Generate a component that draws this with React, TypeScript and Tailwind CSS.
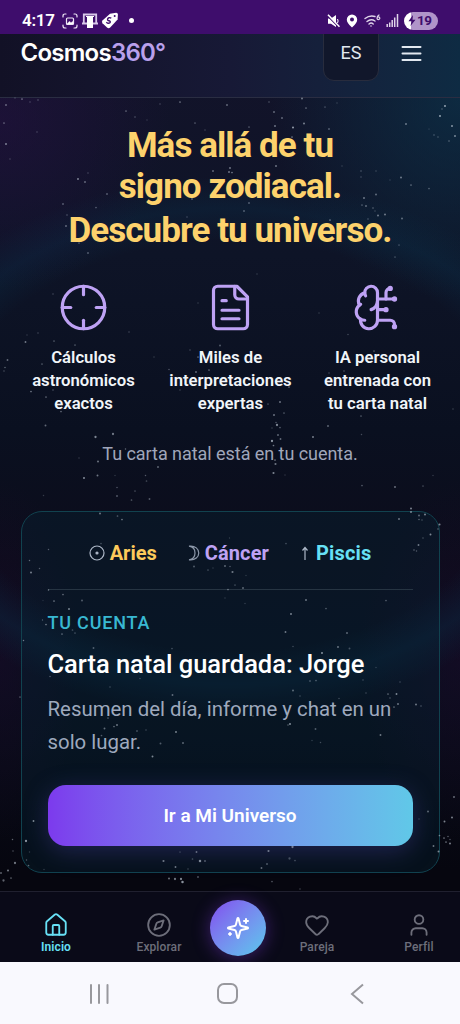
import { BrainCircuit, Compass, Crosshair, Heart, House, User } from "lucide-react";

// x, y, radius, opacity
const stars = [
  [6, 105, 1, 0.6], [22, 99, 0.9, 0.7], [15, 98, 0.7, 0.4], [30, 102, 0.8, 0.4], [38, 100, 0.8, 0.5],
  [160, 104, 0.8, 0.4], [180, 102, 0.9, 0.7], [227, 105, 1, 0.6], [269, 102, 0.8, 0.5], [302, 98.5, 1, 0.7],
  [306, 108, 0.9, 0.6], [325, 107, 0.9, 0.4], [337, 103, 0.8, 0.3], [445, 106, 1.1, 0.9], [442, 109, 0.8, 0.5],
  [4, 123, 0.9, 0.6], [6, 144, 1, 0.8], [10, 159, 0.7, 0.4], [37, 132, 0.8, 0.4], [126, 111, 0.9, 0.6],
  [135, 117, 0.8, 0.5], [147, 120, 0.7, 0.3], [195, 123, 0.9, 0.5], [205, 130, 0.7, 0.4], [249, 127, 0.9, 0.5],
  [274, 112, 1, 0.6], [282, 118, 1, 0.6], [293, 127.5, 1.1, 0.9], [275, 126, 1, 0.7], [304, 123.5, 1.1, 0.7],
  [292, 137, 0.9, 0.7], [329, 129, 1, 0.5], [406, 124, 1, 0.7], [440, 116, 1.1, 0.9], [452, 126, 1, 0.9],
  [455, 136, 1, 0.8], [449, 141, 0.8, 0.6], [434, 135, 0.8, 0.5], [429, 129, 0.6, 0.4], [438, 137, 0.7, 0.5],
  [213, 171, 1, 0.6], [230, 168, 1, 0.7], [229, 172, 1, 0.7], [232, 172.5, 0.9, 0.7], [276, 166, 1, 0.7],
  [78, 179, 1.1, 0.7], [85, 182, 1, 0.6], [88, 173, 0.8, 0.4], [107, 194, 1, 0.5], [63, 204, 1, 0.5],
  [96, 207.5, 0.9, 0.5], [67, 215, 0.8, 0.5], [66, 226, 1, 0.6], [79, 243, 0.9, 0.5], [88, 253, 1, 0.5],
  [192, 199, 1, 0.5], [249, 203, 1, 0.5], [244, 211, 1, 0.5], [187, 217, 0.8, 0.4], [342, 166, 0.8, 0.3],
  [361, 171, 0.8, 0.5], [361, 177, 0.8, 0.4], [376, 171, 0.7, 0.4], [401, 177.5, 1, 0.7], [411, 185, 0.9, 0.6],
  [429, 188.5, 0.9, 0.5], [390, 180, 0.7, 0.3], [376, 194.5, 1, 0.6], [364, 198, 1, 0.7], [362, 205, 0.9, 0.5],
  [366, 206, 1, 0.6], [373, 208, 0.8, 0.6], [378, 215.5, 1, 0.7], [385, 214.5, 1, 0.7], [375, 211, 0.7, 0.4],
  [368, 219, 0.8, 0.5], [402, 218.5, 1, 0.6], [330, 220, 0.9, 0.7], [399, 245, 0.9, 0.4], [395, 257, 0.9, 0.4],
  [53, 294, 0.8, 0.4], [38, 333, 0.8, 0.4], [27, 335, 0.7, 0.3], [25.5, 342, 1, 0.7], [54, 341, 0.9, 0.5],
  [75, 345, 0.9, 0.5], [7.5, 360, 1, 0.6], [5, 367.5, 0.8, 0.6], [4, 371, 0.7, 0.5], [42, 364, 0.9, 0.5],
  [31, 391.5, 0.9, 0.7], [46, 397, 0.9, 0.6], [61, 411.5, 0.9, 0.6], [53, 390, 0.8, 0.5], [129, 332, 0.8, 0.4],
  [154, 357, 0.8, 0.3], [198, 303, 0.8, 0.3], [190, 350, 0.8, 0.4], [220, 345.5, 1, 0.5], [198, 357, 0.9, 0.6],
  [196, 372, 1, 0.6], [169, 369.5, 0.8, 0.5], [209, 370, 0.9, 0.6], [180, 390, 0.7, 0.4], [257, 274, 0.8, 0.3],
  [319, 313, 0.8, 0.3], [348, 334.5, 0.8, 0.4], [374, 351, 0.9, 0.5], [344, 371, 0.8, 0.5], [329, 373, 0.8, 0.4],
  [289, 387, 0.9, 0.6], [280, 402, 1, 0.7], [268, 404, 0.9, 0.4], [274, 415, 1, 0.7], [284, 413, 0.9, 0.5],
  [361, 416, 0.9, 0.5], [453, 409, 0.7, 0.4], [45.5, 425.5, 1, 0.6], [95.5, 437, 1.2, 0.8], [113, 434, 1.2, 0.7],
  [79, 458, 0.8, 0.3], [98, 461.5, 1, 0.7], [125.5, 449, 0.8, 0.6], [84, 478, 1.1, 0.8], [97.5, 475.5, 1, 0.7],
  [158, 467, 1, 0.6], [117, 487.5, 0.8, 0.5], [117, 496, 1, 0.5], [115, 475.5, 0.7, 0.3], [135, 491, 0.9, 0.4],
  [131.5, 500, 0.9, 0.5], [149.5, 499, 1, 0.5], [145.5, 475.5, 0.8, 0.5], [146.5, 481, 0.9, 0.4], [43.5, 495.5, 0.8, 0.3],
  [277, 425, 1.2, 0.8], [280, 427.5, 0.9, 0.5], [276, 422.5, 0.8, 0.5], [272, 428, 0.7, 0.4], [278, 435, 1, 0.6],
  [272, 441, 1.2, 0.9], [280.5, 439, 1, 0.6], [273.5, 445.5, 0.9, 0.7], [313, 437, 1.1, 0.7], [328, 426, 1, 0.6],
  [361.5, 434.5, 0.8, 0.4], [275.5, 464, 1.1, 0.7], [273.5, 473, 1.1, 0.8], [285, 475, 0.7, 0.3], [275, 460, 0.9, 0.7],
  [362, 485.5, 0.9, 0.5], [395, 487, 1.1, 0.6], [423, 486, 0.9, 0.4], [433, 475.5, 0.8, 0.3], [411, 508.5, 1, 0.8],
  [411, 512, 1, 0.8], [419, 515.5, 1, 0.6], [425, 514.5, 1, 0.8], [399, 519, 1, 0.7], [419, 519.5, 0.8, 0.6],
  [422, 520, 0.7, 0.5], [439.5, 524.5, 1.1, 0.8], [438, 529, 0.8, 0.6], [430.5, 534.5, 1, 0.8], [423, 538, 0.7, 0.5],
  [418.5, 545, 1, 0.7], [414, 550, 0.8, 0.6], [416.5, 551, 0.8, 0.5], [100, 513.5, 1, 0.7], [117.5, 516, 0.9, 0.5],
  [122, 519.5, 0.9, 0.7], [101, 543.5, 0.9, 0.4], [48.5, 549.5, 0.8, 0.5], [29.5, 560.5, 0.8, 0.6], [31, 572.5, 1.1, 0.7],
  [39.5, 568.5, 0.8, 0.5], [229.5, 538, 0.7, 0.3], [286, 543.5, 0.9, 0.4], [194, 566.5, 1, 0.5], [208, 570, 0.9, 0.4],
  [213, 568, 0.7, 0.3], [225, 566, 1, 0.6], [230, 566.5, 0.8, 0.5], [232.5, 572, 1.1, 0.7], [246, 575.5, 0.7, 0.3],
  [235, 585, 0.9, 0.4], [243, 588, 1, 0.6], [228, 589.5, 0.9, 0.6], [48.5, 590, 0.8, 0.7], [63, 594.5, 0.9, 0.6],
  [54, 601, 0.9, 0.7], [82, 600.5, 1, 0.5], [69, 609, 1, 0.8], [43, 600.5, 0.7, 0.2], [225, 598, 0.7, 0.3],
  [245, 603.5, 0.8, 0.3], [306, 600, 1, 0.7], [326, 608.5, 0.9, 0.5], [386, 600.5, 0.9, 0.5], [291, 614, 1.1, 0.7],
  [285.5, 632, 1, 0.7], [347, 633, 1, 0.6], [338, 647, 1.1, 0.6], [349.5, 648.5, 1, 0.4], [322, 653, 1.1, 0.8],
  [293, 646.5, 0.8, 0.4], [376, 667.5, 0.8, 0.3], [93.5, 648, 1, 0.5], [172, 648.5, 0.9, 0.4], [42.5, 620, 0.7, 0.5],
  [46, 624.5, 0.9, 0.7], [62, 634, 0.9, 0.6], [72.5, 630, 0.9, 0.4], [75, 633, 0.9, 0.4], [23.5, 640.5, 0.8, 0.7],
  [50, 676.5, 0.8, 0.5], [140, 678.5, 0.7, 0.4], [110, 687, 0.8, 0.4], [172.5, 695, 1, 0.6], [20, 697, 0.9, 0.5],
  [293, 690.5, 1, 0.6], [300, 696, 0.8, 0.4], [310, 681, 1, 0.4], [316, 680.5, 0.9, 0.5], [363, 680, 0.8, 0.4],
  [396.5, 694, 1, 0.8], [388, 694, 0.9, 0.6], [398, 704, 1, 0.7], [394, 707, 0.9, 0.6], [390, 698, 0.8, 0.5],
  [400, 682, 0.8, 0.4], [416, 704.5, 1, 0.7], [421, 706, 0.8, 0.5], [366, 693, 0.8, 0.4], [339, 698.5, 0.8, 0.4],
  [108, 718, 0.9, 0.5], [117, 725, 1, 0.7], [114, 726.5, 0.9, 0.6], [104.5, 728.5, 1, 0.6], [101.5, 735.5, 0.9, 0.5],
  [137, 731, 1, 0.4], [146, 730, 0.8, 0.4], [176, 732, 1.1, 0.7], [160.5, 743.5, 1, 0.5], [183, 743, 1, 0.6],
  [152.5, 756.5, 1, 0.8], [290, 724, 1.1, 0.8], [288, 725, 0.8, 0.6], [315.5, 729, 1, 0.5], [380.5, 735, 1, 0.7],
  [312, 740.5, 0.8, 0.3], [320.5, 742.5, 0.8, 0.4], [253, 716, 0.8, 0.4], [454, 797, 1.1, 0.6], [428, 811.5, 1, 0.6],
  [419, 819, 0.8, 0.3], [452, 817.5, 1, 0.8], [444.5, 821.5, 1, 0.8], [439.5, 835.5, 0.9, 0.7], [444, 838, 0.9, 0.7],
  [448, 836.5, 0.8, 0.6], [446, 842, 0.9, 0.7], [450, 843.5, 1, 0.8], [450, 839.5, 0.8, 0.5], [433.5, 846, 1, 0.7],
  [438.5, 851.5, 1, 0.8], [33.5, 821, 1, 0.8], [12.5, 839.5, 0.8, 0.6], [26, 841, 1.2, 0.9], [13, 851, 0.8, 0.5],
  [29.5, 852, 0.8, 0.3], [15, 863, 1.2, 0.7], [26.5, 860, 0.8, 0.5], [28.5, 865.5, 0.9, 0.6], [8, 870.5, 1.1, 0.7],
  [1, 873, 1, 0.6], [11, 878, 0.9, 0.6], [3.5, 880.5, 1.2, 0.6], [44, 869.5, 0.8, 0.3], [163.5, 861, 1.1, 0.7],
  [180, 852, 0.9, 0.3], [196.5, 852, 1, 0.6], [192.5, 859, 0.9, 0.4], [200, 861, 1.3, 0.8], [205, 861, 1, 0.5],
  [175.5, 867, 1, 0.7], [188, 869, 0.8, 0.4], [169, 878.5, 1, 0.7], [175, 879, 1.2, 0.7], [181, 879, 1.2, 0.8],
  [182.5, 882, 1.3, 0.9], [198, 877, 1, 0.5], [268.5, 851, 1.1, 0.7], [292.5, 847, 1.2, 0.7], [289.5, 858.5, 1.2, 0.4],
  [295, 860.5, 0.9, 0.4], [267, 864, 1, 0.5], [261.5, 868, 1, 0.6], [272, 881.5, 0.9, 0.5], [300, 889, 0.8, 0.4],
];

function DocIcon({ size, strokeWidth, className }: { size?: number | string; strokeWidth?: number | string; className?: string }) {
  return (
    <svg width={size} height={size} viewBox="0 0 24 24" fill="none" stroke="currentColor" strokeWidth={strokeWidth} strokeLinecap="round" strokeLinejoin="round" className={className}>
      <path d="M15 2H6a2 2 0 0 0-2 2v16a2 2 0 0 0 2 2h12a2 2 0 0 0 2-2V7Z" />
      <path d="M14 2v4a2 2 0 0 0 2 2h4" />
      <path d="M10 10.500H8M16 15H8M16 19H8" transform="translate(0 -1.700)" />
    </svg>
  );
}

const features = [
  { icon: Crosshair, lines: ["Cálculos", "astronómicos", "exactos"] },
  { icon: DocIcon, lines: ["Miles de", "interpretaciones", "expertas"] },
  { icon: BrainCircuit, lines: ["IA personal", "entrenada con", "tu carta natal"] },
];

function StatusBar() {
  return (
    <div className="flex h-[34px] shrink-0 items-center bg-[#3e0d6c] pt-[7px] pr-[22px] pl-[22px] text-white">
      <span className="w-[40px] text-[17px] leading-none font-semibold tracking-[-0.3px]">4:17</span>
      <svg width="16" height="16" viewBox="0 0 16 16" fill="none" stroke="#eee6f5" strokeWidth="1.2" strokeLinecap="round">
        <path d="M1 4V3q0-2 2-2h1M12 1h1q2 0 2 2v1M15 12v1q0 2-2 2h-1M4 15H3q-2 0-2-2v-1" />
        <rect x="4.5" y="5" width="7" height="6.5" rx="1" fill="#3e0d6c" />
        <path d="M5 11l2.3-2.6 1.7 1.3 2-1.2v2.5z" fill="white" strokeWidth=".6" />
      </svg>
      <svg className="ml-[4px]" width="16" height="16" viewBox="0 0 16 16" fill="none">
        <path d="M1.8 10V1.5h12.4V10M0 10.5h16" stroke="#d7c7e8" strokeWidth="1.8" />
        <path d="M4 3h8v1h-1v11H5V4H4z" fill="white" />
      </svg>
      <svg className="ml-[3px]" width="18" height="17" viewBox="0 0 18 17" fill="none">
        <path d="M9 1.8l6.2-1.1q1.6 0 1.7 1.6l-.3 5.2-7.4 8q-1.6 1.4-3.2 0l-4.5-4.3q-1.3-1.5.2-3z" fill="white" />
        <circle cx="13.7" cy="4" r="1" fill="#3e0d6c" />
        <path d="M10.3 6.2Q7.6 4.8 6.6 7q-.3 1.5 1.5 1.8t.8 2q-1.600 1.300-3.600-.600" stroke="#3e0d6c" strokeWidth="1.400" />
      </svg>
      <span className="ml-[10px] size-[5px] rounded-full bg-white" />
      <div className="ml-auto flex items-center">
        <svg width="13" height="14" viewBox="0 0 13 14" fill="white">
          <path d="M1 4.500h3L9 1v12L4 9.700H1z" />
          <path d="M0 1.500l12 12" stroke="#3e0d6c" strokeWidth="1.200" />
          <path d="M1 .8l11.500 12" stroke="white" strokeWidth="1.600" />
          <path d="M10.500 5q1.200 2 0 4" fill="none" stroke="white" />
        </svg>
        <svg className="ml-[6px]" width="12" height="14" viewBox="0 0 12 14">
          <path d="M6 .5a5.200 5.200 0 0 1 5.200 5.200Q11.200 9 6 13.500.8 9 .8 5.700A5.200 5.200 0 0 1 6 .5z" fill="white" />
          <circle cx="6" cy="5.500" r="2" fill="#3e0d6c" />
        </svg>
        <svg className="ml-[6px]" width="17" height="14" viewBox="0 0 17 14" fill="none" stroke="#e0d5ea" strokeWidth="1.400" strokeLinecap="round">
          <path d="M1 4.500Q5.500 1 11 2.500M3 7.500q4-3.300 8-.5M5 10q2.200-1.800 4.200 0" />
          <circle cx="7" cy="12" r=".7" fill="white" stroke="none" />
          <path d="M15 1q-2 1.200-2 3.200M13 4.200a1.400 1.400 0 1 0 2.800 0 1.400 1.400 0 1 0-2.800 0" strokeWidth="1.200" />
        </svg>
        <svg className="ml-[5px]" width="13" height="13" viewBox="0 0 13 13" stroke="#e0d5ea" strokeWidth="1.500">
          <path d="M1.200 13v-3M3.700 13V8.500M6.200 13V6M8.700 13V3.500M11.500 13V0" />
        </svg>
        <div className="ml-[5px] flex h-[18px] w-[34px] items-center rounded-full bg-linear-to-r from-white from-20% to-[#b094c9] to-20% pl-[4px] text-[#3e0d6c]">
          <svg width="8" height="11" viewBox="0 0 8 11" fill="currentColor">
            <path d="M5 0L.5 6.200h3L2.500 11l5-6.300h-3z" />
          </svg>
          <span className="ml-[1px] text-[13.500px] leading-none font-bold tracking-[-0.5px]">19</span>
        </div>
      </div>
    </div>
  );
}

function Header() {
  return (
    <header className="flex h-[64px] shrink-0 items-start overflow-hidden border-b border-[#2a2d42] bg-linear-to-r from-[#121126] via-[#171936] to-[#0e2b43] pl-[20.500px]">
      <div className="mt-[4px] font-[Inter] text-[24px] leading-[30px] font-semibold tracking-[-0.750px] text-white">
        Cosmos<span className="text-[#b9a0ec]">360°</span>
      </div>
      <div className="-mt-[12px] mr-[22px] ml-auto flex h-[59px] w-[56px] items-end justify-center rounded-[11px] border border-[#282c3d] bg-[#11172b] pb-[15px] text-[18px] leading-[24px] text-[#e2e8f0]">
        ES
      </div>
      <svg className="mt-[10px] mr-[38px]" width="21" height="18" viewBox="0 0 21 18" stroke="#e2e8f0" strokeWidth="2" strokeLinecap="round">
        <path d="M1.500 3h18M1.500 9.500h18M1.500 16h18" />
      </svg>
    </header>
  );
}

function Sky() {
  return (
    <svg className="pointer-events-none absolute inset-0 z-10" width="460" height="892" viewBox="0 0 460 892">
      {stars.map(([x, y, r, o], i) => (
        <circle key={i} cx={x} cy={y} r={r * 0.95} fill="#cbd5e1" opacity={o * 0.75} />
      ))}
    </svg>
  );
}

function NavItem({ icon: Icon, label, active, className }: { icon: typeof House; label: string; active?: boolean; className: string }) {
  return (
    <div className={`flex flex-col items-center ${active ? "text-[#67e0f5]" : "text-[#6d6e7a]"} ${className}`}>
      <Icon size={26} strokeWidth={1.7} />
      <span className={`mt-[1px] text-[12px] leading-[16px] tracking-[0.1px] ${active ? "font-semibold" : "font-medium"}`}>{label}</span>
    </div>
  );
}

export default function App() {
  return (
    <div className="relative flex h-[1024px] w-[460px] flex-col overflow-hidden bg-[radial-gradient(ellipse_170px_170px_at_0px_120px,#27104480,transparent),radial-gradient(ellipse_190px_200px_at_460px_100px,#0b344bb0,transparent),radial-gradient(ellipse_340px_245px_at_230px_446px,transparent_84%,#0b294270_97%,transparent_110%),radial-gradient(ellipse_100px_180px_at_460px_660px,#1b0a2a80,transparent),radial-gradient(ellipse_80px_180px_at_0px_660px,#1b0a2a80,transparent),linear-gradient(#14132b,#0e1427_25%,#0a1020_42%,#0c0c1b_55%,#090e1d_65%,#06060f_85%)] font-[Roboto,sans-serif]">
      <Sky />
      <StatusBar />
      <Header />

      <main className="flex h-[793px] shrink-0 flex-col px-[20.500px]">
        <h1 className="mt-[28px] text-center text-[35px] leading-[40.500px] font-bold tracking-[-0.950px] text-[#fdd26c]">
          Más allá de tu
          <br />
          signo zodiacal.
          <span className="mt-[4px] block">Descubre tu universo.</span>
        </h1>

        <div className="mt-[30px] grid grid-cols-[126px_168px_126px]">
          {features.map(({ icon: Icon, lines }) => (
            <div key={lines[0]} className="flex flex-col items-center">
              <Icon size={51} strokeWidth={1.5} className="text-[#bea2f4]" />
              <p className="mt-[13px] text-center text-[16.700px] leading-[23px] font-semibold whitespace-nowrap text-[#f1f5f9]">
                {lines.map((line) => (
                  <span key={line} className="block">{line}</span>
                ))}
              </p>
            </div>
          ))}
        </div>

        <p className="mt-[27px] text-center text-[18px] leading-[24px] tracking-[-0.050px] text-[#a0a6ba]">Tu carta natal está en tu cuenta.</p>

        <section className="mt-[45px] h-[362px] rounded-[21px] border border-[#11424f] bg-[#06283852] px-[26px]">
          <div className="flex h-[78px] items-center justify-center border-b border-[#263442] pt-[5px] text-[20px] font-bold">
            <span className="flex items-center gap-[5px] text-[#fdca5b]">
              <svg width="16" height="16" viewBox="0 0 16 16" fill="none" stroke="#aeb8c8" strokeWidth="1.200">
                <circle cx="8" cy="8" r="7" />
                <circle cx="8" cy="8" r="1" fill="#aeb8c8" />
              </svg>
              Aries
            </span>
            <span className="ml-[31px] flex items-center gap-[5px] tracking-[0.100px] text-[#bea2f4]">
              <svg width="12" height="16" viewBox="0 0 12 16" fill="none" stroke="#8d98aa" strokeWidth="1.200">
                <path d="M1 1.200c13-1.500 13 15 0 13.600 8-1.200 8-12.400 0-13.600z" />
              </svg>
              Cáncer
            </span>
            <span className="ml-[32px] flex items-center gap-[7px] text-[#67e0f5]">
              <svg width="8" height="16" viewBox="0 0 8 16" fill="none" stroke="#aeb8c8" strokeWidth="1.200">
                <path d="M4 15V3M1.500 5.500L4 2.500l2.500 3" />
              </svg>
              <span className="tracking-[0.150px]">Piscis</span>
            </span>
          </div>
          <div className="mt-[21px] text-[18px] leading-[24px] font-medium tracking-[0.800px] text-[#38b8d2]">TU CUENTA</div>
          <h2 className="mt-[12px] text-[25.500px] leading-[34px] font-medium tracking-[-0.030px] text-white">Carta natal guardada: Jorge</h2>
          <p className="mt-[12px] text-[20.400px] leading-[33px] text-[#9ea9bd]">
            Resumen del día, informe y chat en un
            <br />
            solo lugar.
          </p>
          <button className="mt-[26px] block h-[61px] w-full rounded-[18px] bg-linear-to-r from-[#7c3aed] to-[#60c8e8] pt-[2px] text-[19px] font-semibold text-white shadow-[0_5px_24px_#4940a066]">
            Ir a Mi Universo
          </button>
        </section>
      </main>

      <nav className="z-20 flex h-[71px] shrink-0 items-start border-t border-[#20202f] bg-[#0a0a18] pt-[20px]">
        <NavItem icon={House} label="Inicio" active className="ml-[26px] w-[60px]" />
        <NavItem icon={Compass} label="Explorar" className="ml-[43px] w-[60px]" />
        <div className="-mt-[12px] ml-[21px] flex size-[56px] items-center justify-center rounded-full bg-linear-to-br from-[#8048ee] to-[#55c8ec] shadow-[0_2px_18px_#7737d077]">
          <svg width="24" height="24" viewBox="0 0 24 24" fill="none" stroke="white" strokeWidth="2" strokeLinecap="round" strokeLinejoin="round">
            <path d="M9.937 15.500A2 2 0 0 0 8.500 14.063l-6.135-1.582a.5.5 0 0 1 0-.962L8.500 9.936A2 2 0 0 0 9.937 8.500l1.582-6.135a.5.5 0 0 1 .963 0L14.063 8.500A2 2 0 0 0 15.500 9.937l6.135 1.581a.5.5 0 0 1 0 .964L15.500 14.063a2 2 0 0 0-1.437 1.437l-1.582 6.135a.5.5 0 0 1-.963 0z" />
            <path d="M20 3v4M22 5h-4M4 17v2M5 18H3" />
          </svg>
        </div>
        <NavItem icon={Heart} label="Pareja" className="ml-[21px] w-[60px]" />
        <NavItem icon={User} label="Perfil" className="ml-[42px] w-[60px]" />
      </nav>

      <div className="relative z-30 flex h-[62px] shrink-0 items-center bg-[#f9f9fe] pt-px pl-[89px]">
        <svg width="21" height="22" viewBox="0 0 21 22" stroke="#98989d" strokeWidth="2" strokeLinecap="round">
          <path d="M2 2v18M10 2v18M18.500 2v18" />
        </svg>
        <div className="ml-[107px] size-[21px] rounded-[7px] border-2 border-[#98989d]" />
        <svg className="ml-[111px]" width="16" height="22" viewBox="0 0 16 22" fill="none" stroke="#98989d" strokeWidth="2">
          <path d="M14 1.500L3 11l11 9.500" />
        </svg>
      </div>
    </div>
  );
}
